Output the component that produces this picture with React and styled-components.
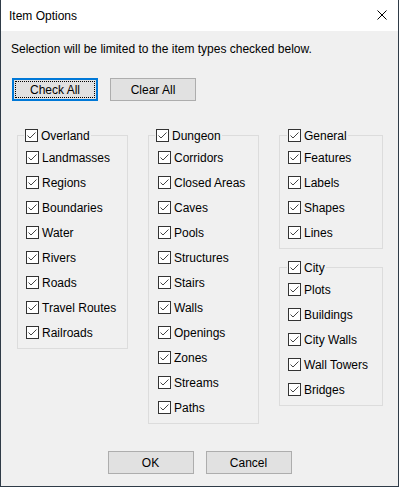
import React from 'react';
import styled, { createGlobalStyle } from 'styled-components';

const GlobalStyle = createGlobalStyle`
  html, body {
    margin: 0;
    padding: 0;
    background: #f0f0f0;
  }
  body {
    font-family: "Liberation Sans", Arial, sans-serif;
    font-size: 12px;
    color: #000000;
  }
`;

const Window = styled.div`
  width: 399px;
  height: 487px;
  box-sizing: border-box;
  border: 1px solid #2f3b47;
  border-top: none;
  background: #f0f0f0;
  display: flex;
  flex-direction: column;
`;

const TitleBar = styled.div`
  height: 31px;
  background: #ffffff;
  display: flex;
  align-items: center;
  justify-content: space-between;
  padding: 0 11px 0 8px;
  flex-shrink: 0;
`;

const Title = styled.span`
  font-size: 12px;
  line-height: 15px;
  padding-top: 2px;
`;

const CloseButton = styled.span`
  display: flex;
  width: 10px;
  height: 10px;
  margin-top: -1px;
`;

const Body = styled.div`
  display: flex;
  flex-direction: column;
  padding: 10px 0 0 10px;
  flex: 1;
`;

const Description = styled.div`
  line-height: 15px;
  height: 15px;
  padding-top: 1px;
  margin-bottom: -1px;
`;

const ButtonRow = styled.div`
  display: flex;
  gap: 12px;
  margin-top: 22px;
  padding-left: 1px;
`;

const Button = styled.button`
  width: 86px;
  height: 23px;
  box-sizing: border-box;
  background: #e1e1e1;
  border: ${p => (p.$default ? '2px solid #0078d7' : '1px solid #adadad')};
  font-family: inherit;
  font-size: 12px;
  color: #000000;
  padding: 2px 0 0;
  position: relative;
  display: flex;
  align-items: center;
  justify-content: center;
  line-height: 15px;

  ${p =>
    p.$focused &&
    `
    &::after {
      content: '';
      position: absolute;
      inset: 1px;
      border: 1px dotted #000000;
    }
  `}
`;

const Columns = styled.div`
  display: flex;
  align-items: flex-start;
  margin-top: 27px;
  padding-left: 6px;
  gap: 20px;
`;

const Stack = styled.div`
  display: flex;
  flex-direction: column;
  gap: 11px;
`;

const Group = styled.fieldset`
  width: ${p => p.$width}px;
  box-sizing: border-box;
  margin: 0;
  border: 1px solid #dcdcdc;
  padding: 7px 0 8px ${p => p.$inset}px;
  min-inline-size: 0;
  display: flex;
  flex-direction: column;
  gap: 10px;
`;

const Legend = styled.legend`
  margin-left: ${p => p.$shift}px;
  padding: 0 1px;
  margin-right: 0;
`;

const Row = styled.label`
  display: flex;
  align-items: center;
  height: 15px;
  gap: 3px;
  line-height: 15px;
  white-space: nowrap;
`;

const Text = styled.span`
  padding-top: 2px;
`;

const Box = styled.span`
  width: 13px;
  height: 13px;
  box-sizing: border-box;
  border: 1px solid #333333;
  background: #ffffff;
  display: flex;
  align-items: center;
  justify-content: center;
  flex-shrink: 0;
`;

const Footer = styled.div`
  display: flex;
  justify-content: center;
  gap: 12px;
  margin-top: auto;
  margin-bottom: 12px;
  padding-right: 10px;
`;

const Check = ({ label }) => (
  <Row>
    <Box>
      <svg width="11" height="11" viewBox="0 0 11 11">
        <polyline points="1.5,5.5 4,8 9.5,2.5" fill="none" stroke="#444444" strokeWidth="1" />
      </svg>
    </Box>
    <Text>{label}</Text>
  </Row>
);

const CheckGroup = ({ title, items, width, inset, shift }) => (
  <Group $width={width} $inset={inset}>
    <Legend $shift={shift}>
      <Check label={title} />
    </Legend>
    {items.map(i => (
      <Check key={i} label={i} />
    ))}
  </Group>
);

const overland = ['Landmasses', 'Regions', 'Boundaries', 'Water', 'Rivers', 'Roads', 'Travel Routes', 'Railroads'];
const dungeon = ['Corridors', 'Closed Areas', 'Caves', 'Pools', 'Structures', 'Stairs', 'Walls', 'Openings', 'Zones', 'Streams', 'Paths'];
const general = ['Features', 'Labels', 'Shapes', 'Lines'];
const city = ['Plots', 'Buildings', 'City Walls', 'Wall Towers', 'Bridges'];

export default function App() {
  return (
    <>
      <GlobalStyle />
      <Window>
        <TitleBar>
          <Title>Item Options</Title>
          <CloseButton>
            <svg width="10" height="10" viewBox="0 0 10 10">
              <path d="M0.5 0.5 L9.5 9.5 M9.5 0.5 L0.5 9.5" stroke="#000" strokeWidth="1" />
            </svg>
          </CloseButton>
        </TitleBar>
        <Body>
          <Description>Selection will be limited to the item types checked below.</Description>
          <ButtonRow>
            <Button $default $focused>Check All</Button>
            <Button>Clear All</Button>
          </ButtonRow>
          <Columns>
            <CheckGroup title="Overland" items={overland} width={111} inset={8} shift={-2} />
            <CheckGroup title="Dungeon" items={dungeon} width={111} inset={9} shift={-3} />
            <Stack>
              <CheckGroup title="General" items={general} width={104} inset={8} shift={-1} />
              <CheckGroup title="City" items={city} width={104} inset={8} shift={-1} />
            </Stack>
          </Columns>
          <Footer>
            <Button>OK</Button>
            <Button>Cancel</Button>
          </Footer>
        </Body>
      </Window>
    </>
  );
}
